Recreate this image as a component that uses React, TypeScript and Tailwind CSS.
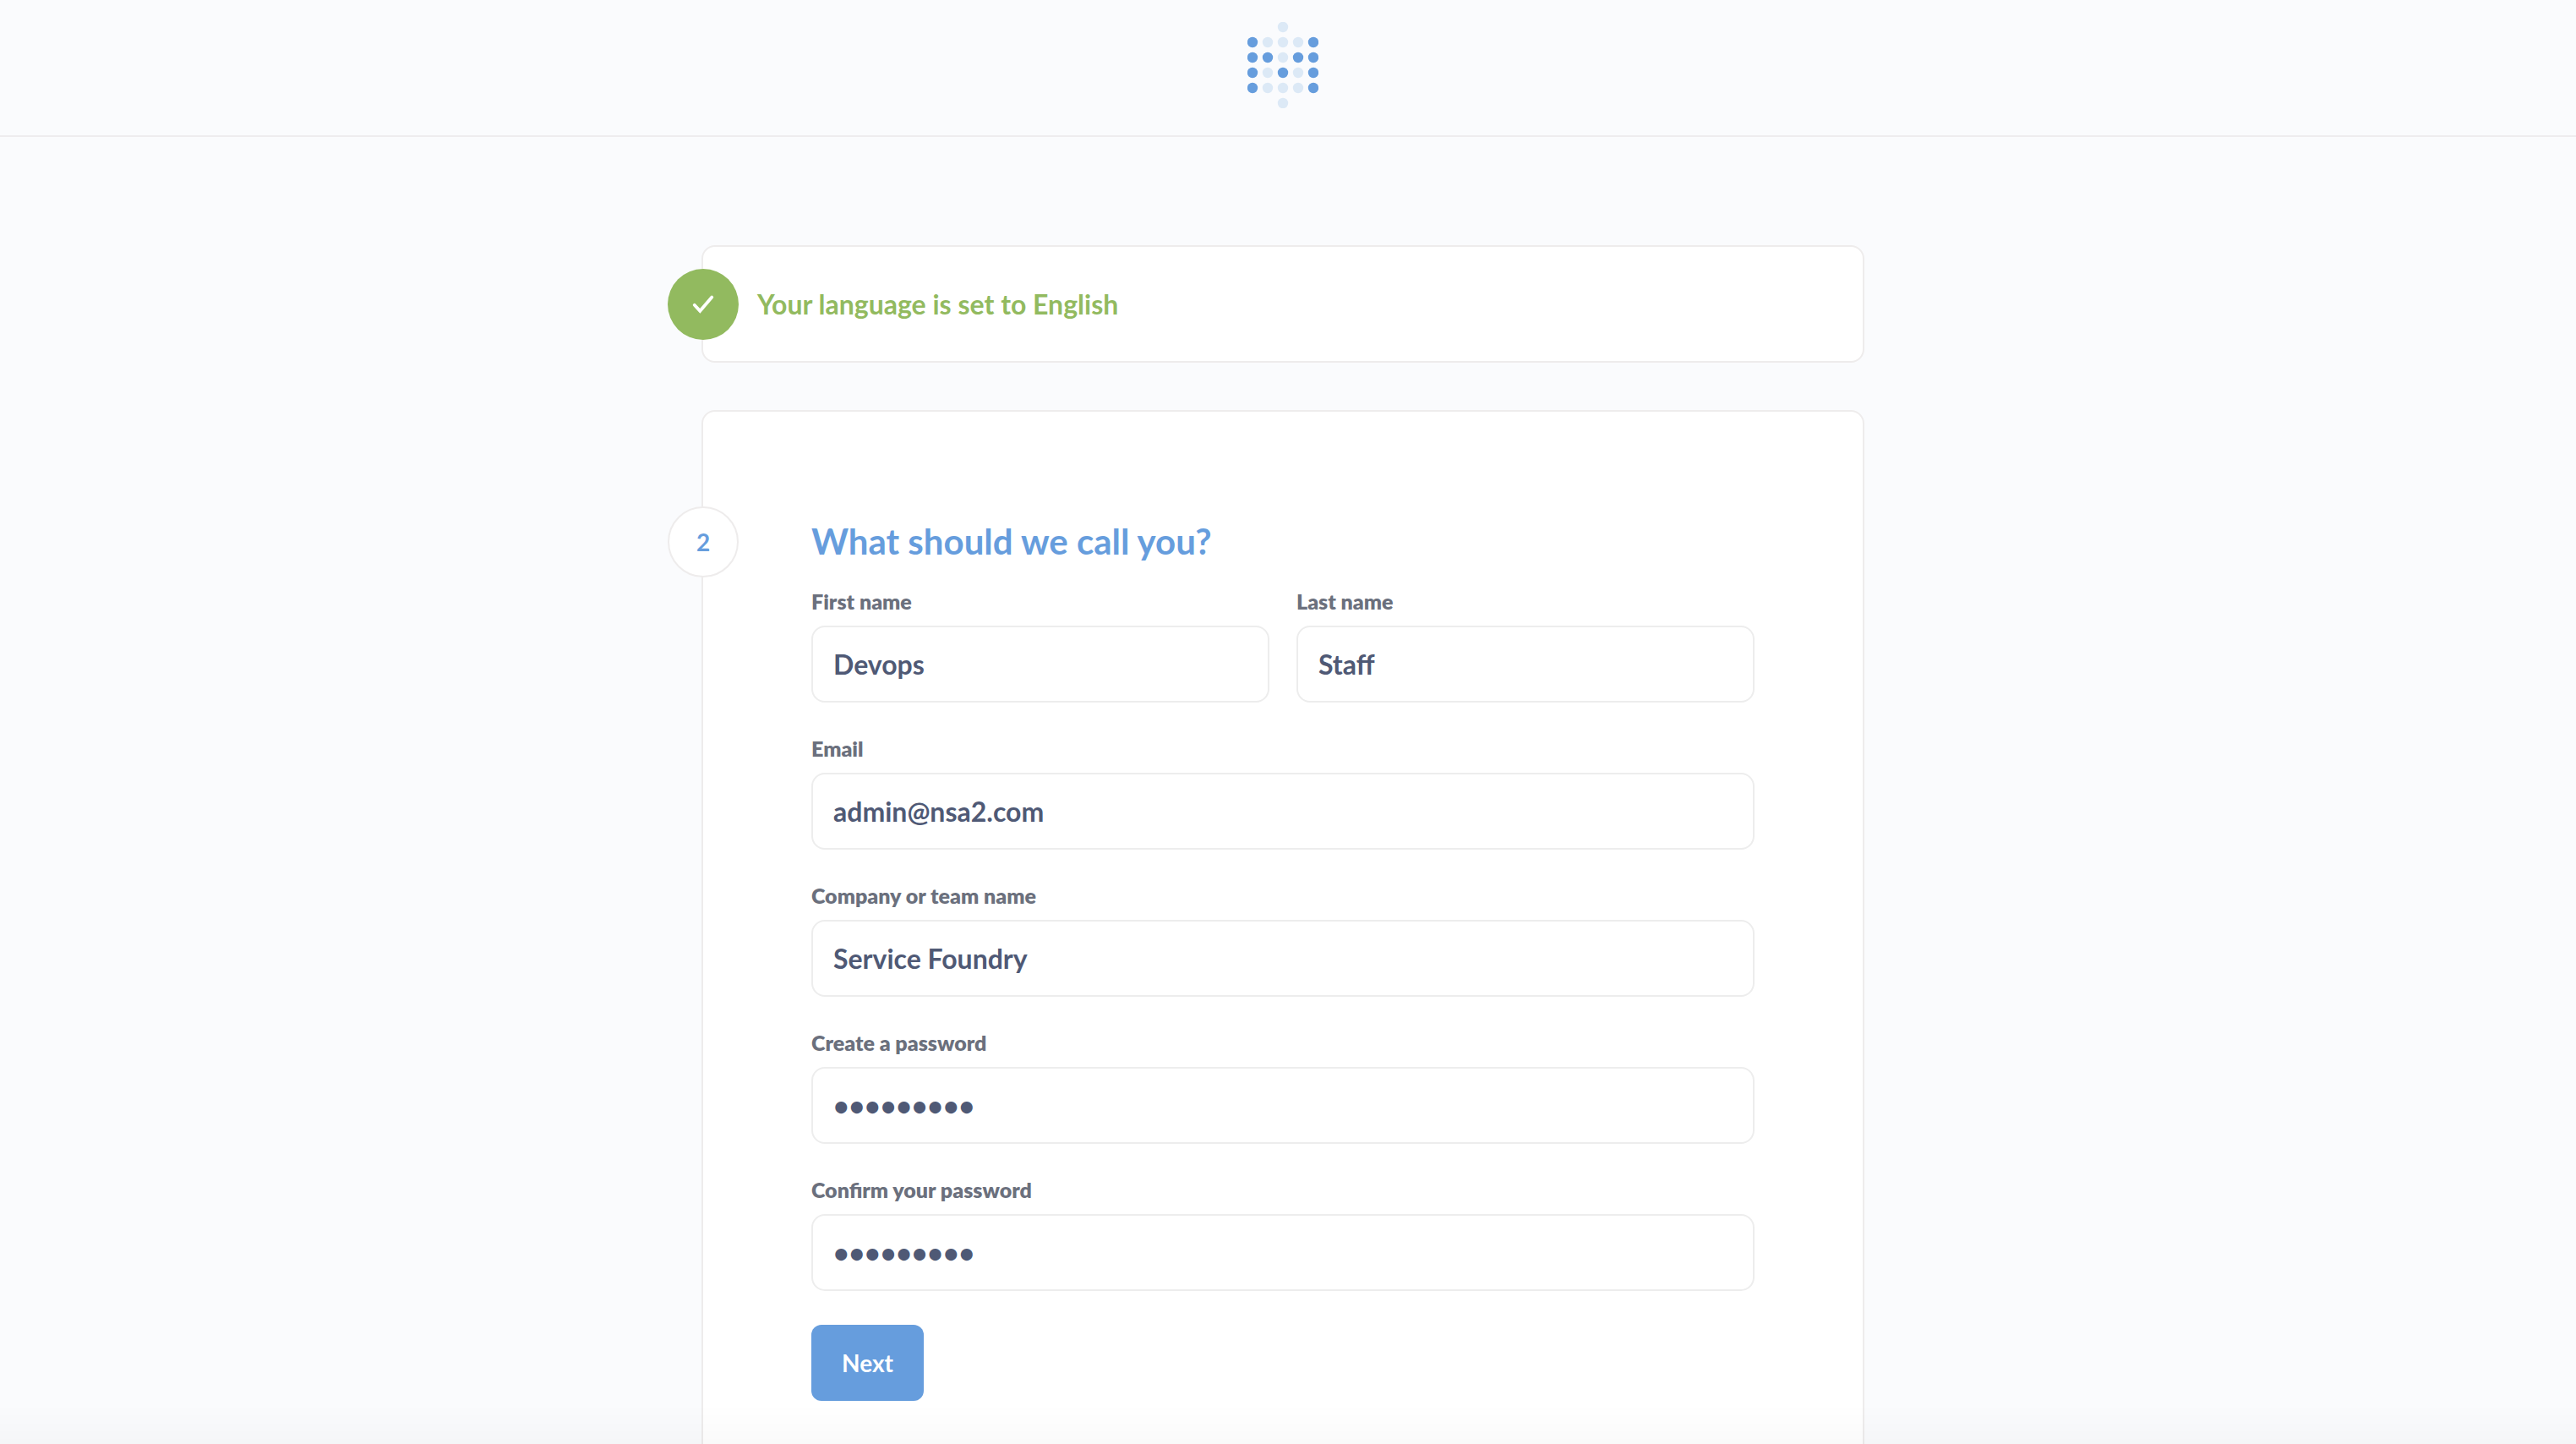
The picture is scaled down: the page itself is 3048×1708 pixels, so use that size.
import React from "react";

const LOGO_ROWS = ["..o..", "#ooo#", "##o##", "#o#o#", "#ooo#", "..o.."];

function Logo() {
  return (
    <svg width="84" height="102" viewBox="0 0 84 102" role="img" aria-label="Metabase">
      {LOGO_ROWS.flatMap((row, y) =>
        row.split("").map((dot, x) =>
          dot === "." ? null : (
            <circle
              key={`${x}-${y}`}
              cx={6 + x * 18}
              cy={6 + y * 18}
              r="6.2"
              fill={dot === "#" ? "#669ddd" : "#dce9f6"}
            />
          ),
        ),
      )}
    </svg>
  );
}

type FieldProps = {
  id: string;
  label: string;
  value: string;
  type?: string;
};

function Field({ id, label, value, type = "text" }: FieldProps) {
  return (
    <div className="flex min-w-0 flex-col gap-[15px]">
      <label htmlFor={id} className="text-[25px] leading-7 font-extrabold text-[#6b707d]">
        {label}
      </label>
      <input
        id={id}
        type={type}
        defaultValue={value}
        className="h-[91px] w-full rounded-2xl border-2 border-[#ededed] bg-white px-6 text-[32px] font-bold text-[#4f5975] outline-none focus:border-[#669ddd]"
      />
    </div>
  );
}

export default function App() {
  return (
    <div className="h-screen overflow-y-auto bg-[#fafbfd] pr-3 font-['Lato',sans-serif] [scrollbar-width:none]">
      <header className="relative -mr-3 flex justify-center border-b-2 border-[#eeecee] pt-[26px] pr-3 pb-8">
        <Logo />
      </header>

      <main className="mx-auto flex w-full max-w-[1376px] flex-col gap-14 pt-32 pb-32">
        <section className="relative rounded-2xl border-2 border-[#eeecec] bg-white px-16 py-12">
          <span className="absolute top-1/2 -left-[42px] flex size-[84px] -translate-y-1/2 items-center justify-center rounded-full bg-[#92ba5f]">
            <svg width="26" height="26" viewBox="0 0 26 26" fill="none" aria-hidden="true">
              <path
                d="M2.7 13.8L9.3 20.8L23.3 4.6"
                stroke="white"
                strokeWidth="3.8"
                strokeLinecap="round"
              />
            </svg>
          </span>
          <p className="text-[32px] leading-[39px] font-bold text-[#92ba5f]">
            Your language is set to English
          </p>
        </section>

        <section className="rounded-2xl border-2 border-[#eeecec] bg-white p-32">
          <div className="relative">
            <span className="absolute top-1/2 -left-[170px] flex size-[84px] -translate-y-1/2 items-center justify-center rounded-full border-2 border-[#eeecec] bg-white text-[28px] font-bold text-[#669ddd]">
              2
            </span>
            <h1 className="text-[42px] leading-[51px] font-bold text-[#669ddd]">
              What should we call you?
            </h1>
          </div>
          <form className="mt-[31px] flex flex-col gap-10" onSubmit={(event) => event.preventDefault()}>
            <div className="grid grid-cols-2 gap-8">
              <Field id="first-name" label="First name" value="Devops" />
              <Field id="last-name" label="Last name" value="Staff" />
            </div>
            <Field id="email" label="Email" value="admin@nsa2.com" type="email" />
            <Field id="company" label="Company or team name" value="Service Foundry" />
            <Field id="password" label="Create a password" value="metabase1" type="password" />
            <Field id="confirm" label="Confirm your password" value="metabase1" type="password" />
            <button
              type="submit"
              className="h-[90px] self-start rounded-xl bg-[#669ddd] px-9 text-[28px] font-bold text-white"
            >
              Next
            </button>
          </form>
        </section>
      </main>

      <div className="pointer-events-none fixed inset-x-0 bottom-0 h-12 bg-linear-to-b from-black/0 to-black/[0.02]" />
    </div>
  );
}
